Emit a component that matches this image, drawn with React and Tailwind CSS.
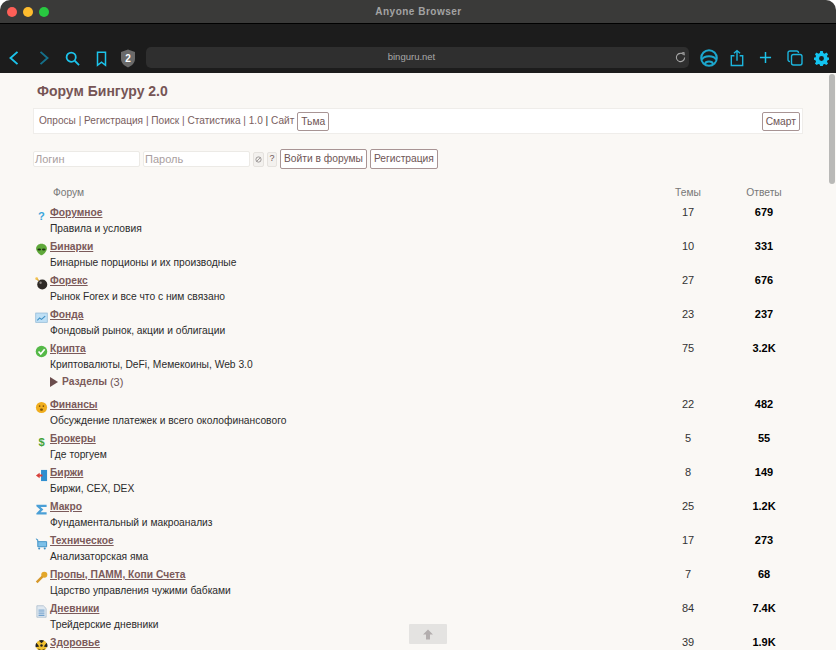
import React from "react";

const font = { fontFamily: '"Liberation Sans", Arial, sans-serif' };

function Icon({ kind }) {
  const c = {
    q: <text x="7" y="11.5" textAnchor="middle" fontSize="12" fontWeight="700" fill="#3aa6dc" fontFamily="Liberation Sans">?</text>,
    alien: <g><path d="M7 0.8 C10.5 0.8 12.8 3.2 12.8 6 C12.8 9 9 13.2 7 13.2 C5 13.2 1.2 9 1.2 6 C1.2 3.2 3.5 0.8 7 0.8Z" fill="#5fa83a" /><ellipse cx="4.6" cy="7" rx="2" ry="1.1" fill="#1d3312" /><ellipse cx="9.4" cy="7" rx="2" ry="1.1" fill="#1d3312" /></g>,
    bomb: <g><circle cx="7.8" cy="8" r="5.4" fill="#2e2a26" /><circle cx="6" cy="6.2" r="1.3" fill="#8a8580" /><path d="M4 4 L1.5 1.5" stroke="#b98f3a" strokeWidth="1.4" /><circle cx="1.8" cy="1.8" r="1.5" fill="#f2c14e" /></g>,
    chart: <g><rect x="0.8" y="2.2" width="12.4" height="10" fill="#bfe0f5" stroke="#8fb8d6" strokeWidth="0.8" /><path d="M2.5 10 L5 7.5 L7 9 L11 5.5" stroke="#3d8fc4" strokeWidth="1.2" fill="none" /></g>,
    check: <g><circle cx="7" cy="7" r="6.2" fill="#55b948" /><path d="M3.8 7 L6.2 9.6 L10.4 4.6" stroke="#fff" strokeWidth="1.8" fill="none" /></g>,
    face: <g><circle cx="7" cy="7" r="6" fill="#f0ae1e" /><circle cx="5" cy="5.5" r="0.9" fill="#7a4f08" /><circle cx="9" cy="5.5" r="0.9" fill="#7a4f08" /><rect x="5.5" y="8" width="3" height="2.4" rx="1" fill="#7a4f08" /></g>,
    dollar: <text x="7" y="11.5" textAnchor="middle" fontSize="12" fontWeight="700" fill="#45a33a" fontFamily="Liberation Sans">$</text>,
    door: <g><rect x="6.5" y="1" width="6.5" height="12" fill="#2f8fd0" /><path d="M1 7 L5 4 V6 H8 V8 H5 V10Z" fill="#d8403a" /></g>,
    sigma: <path d="M1.5 2 H12.5 V4.2 H6 L9 7 L6 10 H12.5 V12.5 H1.5 V11 L5.5 7 L1.5 3.5Z" fill="#4a9fd6" />,
    cart: <g><path d="M1 2 L3 3 V10.5 H12.5 V5 H3" fill="#7cc0e8" stroke="#3d8fc4" strokeWidth="1" /><circle cx="4.5" cy="12.3" r="1.1" fill="#3d8fc4" /><circle cx="10.5" cy="12.3" r="1.1" fill="#3d8fc4" /></g>,
    key: <g><circle cx="10" cy="4" r="3.3" fill="#e3a72a" /><path d="M8 6 L1.8 12.2" stroke="#d6982a" strokeWidth="2.6" /></g>,
    doc: <g><path d="M2 0.8 H9 L12 3.8 V13.2 H2Z" fill="#dfe8f0" stroke="#9db3c6" strokeWidth="0.7" /><path d="M3.8 5.5 H10.2 M3.8 7.5 H10.2 M3.8 9.5 H10.2 M3.8 11.3 H10.2" stroke="#5a93c4" strokeWidth="0.9" /></g>,
    rad: <g><circle cx="7" cy="7" r="6" fill="#f2c230" /><circle cx="7" cy="7" r="1.3" fill="#222" /><path d="M7 4.6 L4.2 1.8 A6 6 0 0 1 9.8 1.8Z M4.6 8.2 L0.8 9 A6 6 0 0 1 1.5 4Z M9.4 8.2 L13.2 9 A6 6 0 0 0 12.5 4Z" fill="#222" /><path d="M3 10 Q7 13.5 11 10 L9 12.8 H5Z" fill="#222" /></g>,
  }[kind];
  return <svg viewBox="0 0 14 14" className="w-[13px] h-[13px] shrink-0 mt-[5px] ml-[2px]">{c}</svg>;
}

function Forum({ icon, title, desc, topics, replies, children }) {
  return (
    <div className="flex">
      <div className="w-[17px] flex justify-start"><Icon kind={icon} /></div>
      <div className="w-[613px] pt-[1px]">
        <a className="block h-[16px] leading-[16px] text-[10.25px] font-bold text-[#7b5a5a] underline">{title}</a>
        <div className="h-[17px] leading-[16px] text-[10.25px] text-[#2b2b2b]">{desc}</div>
        {children}
      </div>
      <div className="w-[50px] text-center text-[11px] leading-[16px] text-[#333]">{topics}</div>
      <div className="w-[78px] ml-[12px] text-center text-[11px] leading-[16px] font-bold text-black">{replies}</div>
    </div>
  );
}

const rows = [
  ["q", "Форумное", "Правила и условия", 17, "679"],
  ["alien", "Бинарки", "Бинарные порционы и их производные", 10, "331"],
  ["bomb", "Форекс", "Рынок Forex и все что с ним связано", 27, "676"],
  ["chart", "Фонда", "Фондовый рынок, акции и облигации", 23, "237"],
  ["check", "Крипта", "Криптовалюты, DeFi, Мемекоины, Web 3.0", 75, "3.2K", true],
  ["face", "Финансы", "Обсуждение платежек и всего околофинансового", 22, "482"],
  ["dollar", "Брокеры", "Где торгуем", 5, "55"],
  ["door", "Биржи", "Биржи, CEX, DEX", 8, "149"],
  ["sigma", "Макро", "Фундаментальный и макроанализ", 25, "1.2K"],
  ["cart", "Техническое", "Анализаторская яма", 17, "273"],
  ["key", "Пропы, ПАММ, Копи Счета", "Царство управления чужими бабками", 7, "68"],
  ["doc", "Дневники", "Трейдерские дневники", 84, "7.4K"],
  ["rad", "Здоровье", "", 39, "1.9K"],
];

const btn = "h-[19px] px-[3px] border border-[#a89494] rounded-[2px] bg-white text-[10.25px] leading-[17px] text-[#6e5555]";

export default function App() {
  return (
    <div style={font} className="relative w-[836px] h-[650px] overflow-hidden bg-[#faf8f5] rounded-t-[10px]">
      {/* title bar */}
      <div className="h-[24px] bg-[#3a3a39] border-b border-black flex items-center relative">
        <div className="flex gap-[6px] ml-[7px]">
          <span className="w-[10px] h-[10px] rounded-full bg-[#fe5f57]" />
          <span className="w-[10px] h-[10px] rounded-full bg-[#febc2e]" />
          <span className="w-[10px] h-[10px] rounded-full bg-[#28c840]" />
        </div>
        <div className="flex-1 text-center text-[10px] font-bold text-[#a3a3a3] tracking-[0.5px] mr-[48px]">Anyone Browser</div>
      </div>
      {/* toolbar */}
      <div className="h-[49px] bg-[#1c1c1c] flex items-end pb-[6px] text-[#1fb6dc]">
        <svg viewBox="0 0 16 20" className="w-[14px] h-[18px] ml-[7px]" fill="none" stroke="#1cc3ea" strokeWidth="2.2"><path d="M12 3 L4 10 L12 17" /></svg>
        <svg viewBox="0 0 16 20" className="w-[14px] h-[18px] ml-[16px]" fill="none" stroke="#15708a" strokeWidth="2.2"><path d="M4 3 L12 10 L4 17" /></svg>
        <svg viewBox="0 0 16 16" className="w-[15px] h-[15px] ml-[14px] mb-[1px]" fill="none" stroke="#1cc3ea" strokeWidth="1.9"><circle cx="6.6" cy="6.6" r="4.9" /><path d="M10.4 10.4 L15 15" /></svg>
        <svg viewBox="0 0 12 18" className="w-[11px] h-[16px] ml-[16px]" fill="none" stroke="#1cc3ea" strokeWidth="1.7"><path d="M1.5 1.5 H10.5 V16 L6 12.5 L1.5 16Z" /></svg>
        <div className="relative w-[16px] h-[19px] ml-[13px] mb-[-1px]">
          <svg viewBox="0 0 16 19" className="w-[16px] h-[19px]"><path d="M8 0.5 L15 3 V10 C15 14 11.5 17 8 18.5 C4.5 17 1 14 1 10 V3Z" fill="#6a6a6a" /></svg>
          <span className="absolute inset-0 flex items-center justify-center text-[10px] font-bold text-white">2</span>
        </div>
        <div className="w-[543px] h-[21px] ml-[10px] mb-[-1px] bg-[#2f2f2f] rounded-[5px] flex items-center relative">
          <span className="flex-1 text-center text-[9.5px] text-[#a9a9a9] ml-[2px]">binguru.net</span>
          <svg viewBox="0 0 16 16" className="w-[11px] h-[11px] mr-[3px]" fill="none" stroke="#a8a8a8" strokeWidth="1.5"><path d="M12.5 4 A6 6 0 1 0 14 8" /><path d="M9.5 1.5 L13 1 L13.5 5" /></svg>
        </div>
        <svg viewBox="0 0 18 18" className="w-[18px] h-[18px] ml-[11px]" fill="none" stroke="#1ca6cc" strokeWidth="2"><circle cx="9" cy="9" r="7.8" /><path d="M2 10.5 C4 6 14 6 16 10.5 M5 15 C5.5 11.5 12.5 11.5 13 15" /></svg>
        <svg viewBox="0 0 16 20" className="w-[14px] h-[18px] ml-[12px]" fill="none" stroke="#1cb4dc" strokeWidth="1.6"><path d="M5 7.5 H1.5 V18.5 H14.5 V7.5 H11 M8 13 V1.5 M4.5 4.5 L8 1.5 L11.5 4.5" /></svg>
        <svg viewBox="0 0 14 14" className="w-[13px] h-[13px] ml-[15px] mb-[3px]" fill="none" stroke="#1cc3ea" strokeWidth="1.6"><path d="M7 1 V13 M1 7 H13" /></svg>
        <svg viewBox="0 0 16 16" className="w-[16px] h-[16px] ml-[15px] mb-[1px]" fill="none" stroke="#1cb4dc" strokeWidth="1.4"><rect x="4.5" y="4.5" width="10.5" height="10.5" rx="2" /><path d="M3 11.5 C1.5 11.5 1 10.5 1 9.5 V3 C1 1.8 1.8 1 3 1 H9.5 C10.5 1 11.5 1.5 11.5 3" /></svg>
        <svg viewBox="0 0 16 16" className="w-[15px] h-[15px] ml-[11px] mb-[1px]" fill="#13c4f0"><path fillRule="evenodd" d="M6.6 0 H9.4 L9.8 2.1 L11.4 2.8 L13.2 1.6 L15 3.5 L13.8 5.2 L14.5 6.9 L16 7 V9.4 L14.5 9.8 L13.8 11.4 L15 13.2 L13.2 15 L11.4 13.8 L9.8 14.5 L9.4 16 H6.6 L6.2 14.5 L4.6 13.8 L2.8 15 L1 13.2 L2.2 11.4 L1.5 9.8 L0 9.4 V7 L1.5 6.9 L2.2 5.2 L1 3.5 L2.8 1.6 L4.6 2.8 L6.2 2.1Z M8 5.4 A2.6 2.6 0 1 0 8 10.6 A2.6 2.6 0 1 0 8 5.4Z" /></svg>
      </div>

      {/* page */}
      <div className="pl-[33px] pr-[33px]">
        <h1 className="ml-[4px] mt-[9px] h-[18px] leading-[18px] text-[14px] font-bold text-[#765555]">Форум Бингуру 2.0</h1>
        <div className="mt-[8px] h-[26px] bg-white border border-[#efedea] flex items-center justify-between pl-[5px] pr-[2px] text-[10.25px] text-[#7a6060]">
          <div className="flex items-center gap-[3px]">
            <span className="text-[10.1px]">Опросы | Регистрация | Поиск | Статистика | 1.0 <b className="font-normal text-[#333]">|</b> Сайт</span>
            <span className={btn}>Тьма</span>
          </div>
          <span className={btn}>Смарт</span>
        </div>
        <div className="mt-[15px] flex items-center gap-[3px] h-[20px]">
          <div className="w-[107px] h-[16px] bg-white border border-[#eceae6] rounded-[2px] text-[11px] leading-[14px] text-[#a99e9e] pl-[1px]">Логин</div>
          <div className="w-[107px] h-[16px] bg-white border border-[#eceae6] rounded-[2px] text-[11px] leading-[14px] text-[#a99e9e] pl-[1px]">Пароль</div>
          <div className="w-[11px] h-[15px] bg-[#f3f1ee] border border-[#e5e2de] rounded-[2px] flex items-center justify-center">
            <svg viewBox="0 0 8 8" className="w-[7px] h-[7px]" fill="none" stroke="#8a8585" strokeWidth="0.9"><circle cx="4" cy="4" r="3" /><path d="M1.8 6.2 L6.2 1.8" /></svg>
          </div>
          <div className="w-[10px] h-[15px] bg-[#f3f1ee] border border-[#e5e2de] rounded-[2px] flex items-center justify-center text-[9px] text-[#6e5555]">?</div>
          <span className={btn + " h-[20px] leading-[18px] px-[3px]"}>Войти в форумы</span>
          <span className={btn + " h-[20px] leading-[18px] px-[3px]"}>Регистрация</span>
        </div>
        <div className="mt-[15px] h-[16px] pt-[1px] flex text-[10.25px] leading-[16px] text-[#777]">
          <div className="w-[630px] pl-[20px]">Форум</div>
          <div className="w-[50px] text-center">Темы</div>
          <div className="w-[78px] ml-[12px] text-center">Ответы</div>
        </div>
        <div className="mt-[4px]">
          {rows.map((r) => (
            <Forum key={r[1]} icon={r[0]} title={r[1]} desc={r[2]} topics={r[3]} replies={r[4]}>
              {r[5] && (
                <div className="h-[22px] pb-[6px] flex items-center text-[10.25px] font-bold text-[#7b5a5a]">
                  <svg viewBox="0 0 8 10" className="w-[8px] h-[10px] mr-[4px]"><path d="M0 0 L8 5 L0 10Z" fill="#6b4d4d" /></svg>
                  Разделы&nbsp;<span className="font-normal text-[11px] text-[#6e5555]">(3)</span>
                </div>
              )}
            </Forum>
          ))}
        </div>
      </div>

      {/* scrollbar */}
      <div className="absolute right-[1px] top-[74px] w-[6px] h-[110px] rounded-[3px] bg-[#b9b9b7]" />
      {/* back to top */}
      <div className="absolute left-[409px] top-[624px] w-[38px] h-[20px] bg-[#e4e3e1] rounded-[1px] flex items-center justify-center">
        <svg viewBox="0 0 10 10" className="w-[10px] h-[11px]"><path d="M5 0 L10 5 H7 V10 H3 V5 H0Z" fill="#b3aeae" /></svg>
      </div>
    </div>
  );
}
